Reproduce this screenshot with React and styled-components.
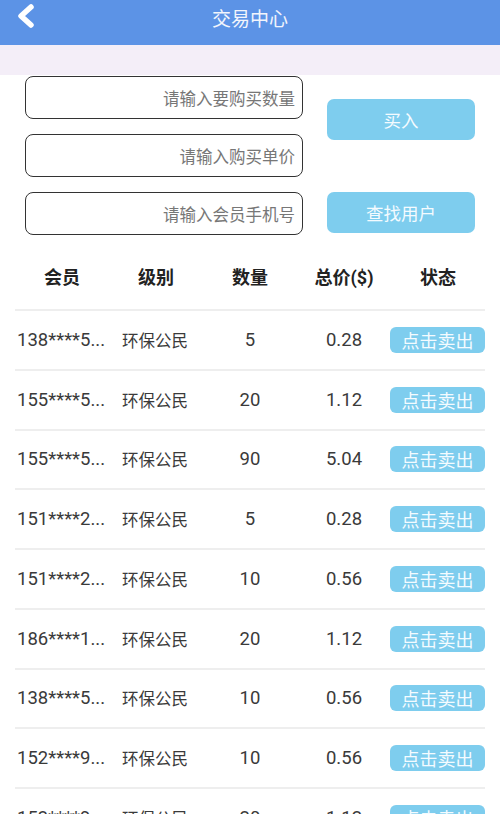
import React from 'react';
import styled, { createGlobalStyle } from 'styled-components';

const GlobalStyle = createGlobalStyle`
  body {
    margin: 0;
    background: #ffffff;
    font-family: Roboto, "Noto Sans CJK SC", sans-serif;
  }
`;

const Page = styled.div`
  width: 500px;
  height: 814px;
  overflow: hidden;
  background: #ffffff;
`;

const TopBar = styled.div`
  position: relative;
  height: 45px;
  background: #5c93e6;
  display: flex;
  align-items: center;
  justify-content: center;
`;

const BackButton = styled.div`
  position: absolute;
  left: 14px;
  top: 2px;
  width: 24px;
  height: 28px;
`;

const Title = styled.div`
  color: #f2f5fc;
  font-size: 19px;
  margin-top: -10px;
  font-family: "Noto Sans CJK SC", sans-serif;
`;

const Band = styled.div`
  height: 30px;
  background: #f4eef8;
`;

const Form = styled.div`
  display: flex;
  gap: 24px;
  padding: 1px 25px 0 25px;
`;

const Inputs = styled.div`
  display: flex;
  flex-direction: column;
  gap: 15px;
`;

const Input = styled.input`
  box-sizing: border-box;
  width: 278px;
  height: 43px;
  border: 1.5px solid #333;
  border-radius: 8px;
  padding: 0 7px;
  text-align: right;
  font-size: 16.5px;
  font-family: "Noto Sans CJK SC", sans-serif;
  outline: none;
  &::placeholder {
    color: #777;
  }
`;

const Actions = styled.div`
  display: flex;
  flex-direction: column;
  gap: 52px;
  padding-top: 23px;
`;

const ActionButton = styled.button`
  width: 148px;
  height: 41px;
  border: none;
  border-radius: 7px;
  background: #7ecdee;
  color: #f4fbff;
  font-size: 17.5px;
  font-family: "Noto Sans CJK SC", sans-serif;
`;

const Table = styled.div`
  margin: 0 15px;
`;

const Row = styled.div`
  display: grid;
  grid-template-columns: repeat(5, 94px);
  align-items: center;
  height: ${p => (p.$head ? '64px' : '57.75px')};
  border-bottom: 2px solid #eeeeee;
  margin-top: ${p => (p.$head ? '10px' : '0')};
`;

const HeadCell = styled.div`
  text-align: center;
  font-size: 18px;
  font-weight: bold;
  color: #222;
  padding-bottom: 2px;
`;

const Phone = styled.div`
  font-size: 18.5px;
  color: #3a3a3a;
  white-space: nowrap;
  padding-left: 2px;
`;

const Level = styled.div`
  font-size: 16.5px;
  color: #3a3a3a;
  padding-left: 13px;
  white-space: nowrap;
  font-family: "Noto Sans CJK SC", sans-serif;
`;

const Num = styled.div`
  font-size: 18.5px;
  color: #3a3a3a;
  text-align: center;
`;

const SellButton = styled.div`
  justify-self: end;
  width: 95px;
  height: 26px;
  border-radius: 6px;
  background: #7ecdee;
  color: #f4fbff;
  font-size: 18px;
  font-family: "Noto Sans CJK SC", sans-serif;
  display: flex;
  align-items: center;
  justify-content: center;
`;

const rows = [
  { phone: '138****5...', qty: '5', total: '0.28' },
  { phone: '155****5...', qty: '20', total: '1.12' },
  { phone: '155****5...', qty: '90', total: '5.04' },
  { phone: '151****2...', qty: '5', total: '0.28' },
  { phone: '151****2...', qty: '10', total: '0.56' },
  { phone: '186****1...', qty: '20', total: '1.12' },
  { phone: '138****5...', qty: '10', total: '0.56' },
  { phone: '152****9...', qty: '10', total: '0.56' },
  { phone: '153****9...', qty: '20', total: '1.12' },
];

export default function App() {
  return (
    <Page>
      <GlobalStyle />
      <TopBar>
        <BackButton>
          <svg width="24" height="28" viewBox="0 0 24 28">
            <path d="M17 5 L7 14 L17 23" fill="none" stroke="#fff" strokeWidth="5.5" strokeLinecap="round" strokeLinejoin="round" />
          </svg>
        </BackButton>
        <Title>交易中心</Title>
      </TopBar>
      <Band />
      <Form>
        <Inputs>
          <Input placeholder="请输入要购买数量" />
          <Input placeholder="请输入购买单价" />
          <Input placeholder="请输入会员手机号" />
        </Inputs>
        <Actions>
          <ActionButton>买入</ActionButton>
          <ActionButton>查找用户</ActionButton>
        </Actions>
      </Form>
      <Table>
        <Row $head>
          <HeadCell>会员</HeadCell>
          <HeadCell>级别</HeadCell>
          <HeadCell>数量</HeadCell>
          <HeadCell>总价($)</HeadCell>
          <HeadCell>状态</HeadCell>
        </Row>
        {rows.map((r, i) => (
          <Row key={i}>
            <Phone>{r.phone}</Phone>
            <Level>环保公民</Level>
            <Num>{r.qty}</Num>
            <Num>{r.total}</Num>
            <SellButton>点击卖出</SellButton>
          </Row>
        ))}
      </Table>
    </Page>
  );
}
